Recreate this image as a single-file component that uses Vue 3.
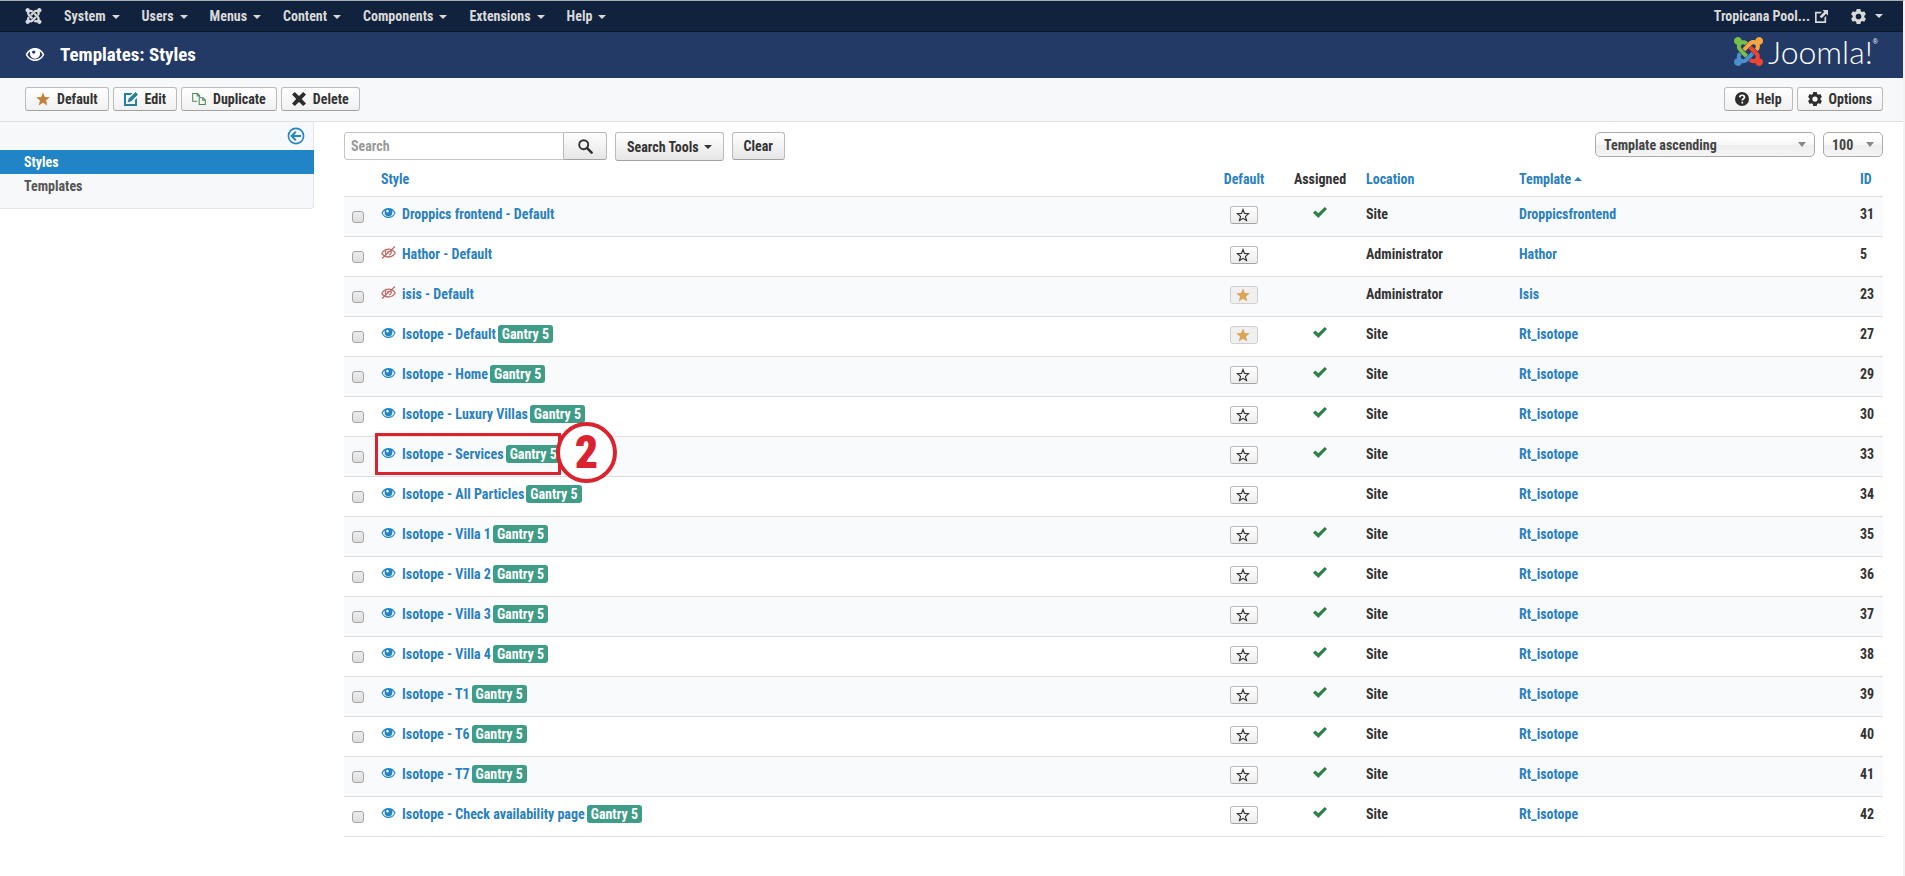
<script setup>
import { ref } from 'vue'

const menus = ['System', 'Users', 'Menus', 'Content', 'Components', 'Extensions', 'Help']

const tools = [
  { label: 'Default', icon: 'star', tone: 'orange' },
  { label: 'Edit', icon: 'edit', tone: 'teal' },
  { label: 'Duplicate', icon: 'copy', tone: 'green' },
  { label: 'Delete', icon: 'cross', tone: 'dark' },
]

const search = ref('')

const isotope = (id, name, extra = {}) => ({
  id, name: `Isotope - ${name}`, gantry: true, preview: true, assigned: true, location: 'Site', template: 'Rt_isotope', ...extra,
})

const rows = [
  { id: 31, name: 'Droppics frontend - Default', preview: true, assigned: true, location: 'Site', template: 'Droppicsfrontend' },
  { id: 5, name: 'Hathor - Default', location: 'Administrator', template: 'Hathor' },
  { id: 23, name: 'isis - Default', isDefault: true, location: 'Administrator', template: 'Isis' },
  isotope(27, 'Default', { isDefault: true }),
  isotope(29, 'Home'),
  isotope(30, 'Luxury Villas'),
  isotope(33, 'Services', { step: 2 }),
  isotope(34, 'All Particles', { assigned: false }),
  isotope(35, 'Villa 1'),
  isotope(36, 'Villa 2'),
  isotope(37, 'Villa 3'),
  isotope(38, 'Villa 4'),
  isotope(39, 'T1'),
  isotope(40, 'T6'),
  isotope(41, 'T7'),
  isotope(42, 'Check availability page'),
]
</script>

<template>
  <div class="page">
    <svg class="sprite" aria-hidden="true">
      <symbol id="joomla" viewBox="0 0 24 24">
        <path class="j-blue" d="M16.719 14.759L14.22 17.26l-2.37 2.37-.462.466c-1.368 1.365-3.297 1.83-5.047 1.397-.327 1.424-1.604 2.49-3.13 2.49C1.438 23.983 0 22.547 0 20.772c0-1.518 1.055-2.789 2.469-3.123-.446-1.76.016-3.705 1.396-5.08l.179-.18 2.37 2.37-.184.181c-.769.779-.769 2.024 0 2.789.771.78 2.022.78 2.787 0l.465-.465 2.367-2.371 2.502-2.506 2.368 2.372z" />
        <path class="j-red" d="M17.643 21.411c-1.822.563-3.885.12-5.328-1.318l-.18-.185 2.365-2.369.18.184c.771.768 2.018.768 2.787 0 .765-.765.769-2.01-.004-2.781l-.466-.465-2.365-2.37-2.502-2.503 2.37-2.369 2.499 2.505 2.367 2.37.464.464c1.365 1.36 1.846 3.278 1.411 5.021 1.56.224 2.759 1.56 2.759 3.18 0 1.784-1.439 3.21-3.209 3.21-1.545 0-2.851-1.096-3.135-2.565z" />
        <path class="j-orange" d="M6.975 9.461l2.508-2.505 2.37-2.37.462-.461c1.444-1.443 3.504-1.892 5.331-1.318C17.912 1.26 19.221.092 20.803.092c1.775 0 3.215 1.439 3.215 3.213 0 1.637-1.225 2.987-2.809 3.188.49 1.785.029 3.76-1.376 5.158l-.182.184-2.369-2.369.184-.184c.769-.77.769-2.016 0-2.783-.766-.766-2.011-.768-2.781.003l-.462.461-2.37 2.369-2.508 2.498z" />
        <path class="j-green" d="M3.938 11.51c-1.405-1.403-1.873-3.357-1.407-5.127C1.082 6.1 0 4.82 0 3.297 0 1.52 1.44.084 3.21.084c1.625 0 2.969 1.209 3.18 2.779 1.748-.416 3.668.05 5.028 1.407l.182.184-2.37 2.369-.184-.179c-.768-.765-2.011-.765-2.783 0-.764.78-.764 2.01.006 2.79l.461.45 2.37 2.37 2.505 2.505-2.37 2.355-2.49-2.505L4.4 12.015z" />
      </symbol>
      <symbol id="eye" viewBox="0 0 20 14">
        <path fill-rule="evenodd" d="M10 0C5.500 0 2 2.700 0 7c2 4.300 5.600 7 10 7s8-2.700 10-7C18 2.700 14.500 0 10 0zM10 12.400C6.600 12.400 3.500 10.600 1.800 7.400c.8-1.700 1.800-2.900 3-3.900A5.300 5.300 0 0 0 4.500 6a5.500 5.500 0 0 0 11 0c0-.9-.1-1.700-.4-2.500 1.300 1 2.300 2.200 3.100 3.900-1.700 3.200-4.800 5-8.200 5zM8.600 2.600a1.800 1.800 0 1 1 0 3.600 1.800 1.800 0 0 1 0-3.600z" />
      </symbol>
      <symbol id="eye-off" viewBox="0 0 15 13">
        <g fill="none" stroke="currentColor" stroke-width="1.300">
          <path d="M.8 7.500C2.500 4.500 4.800 3.200 7.500 3.200c2.700 0 5 1.300 6.700 3.800-1.700 2.800-4 4-6.700 4-2.800 0-5-1.100-6.700-3.500z" />
          <path d="M1 12.500 14 .5M5 4.200c-.9 1.800-.8 3.600.6 4.800M9.800 4c1 1.800.4 4.200-1.500 5.200M7.300 4.800l-.9 2.600" />
        </g>
      </symbol>
      <symbol id="star" viewBox="0 0 16 16"><path d="M8 0.500l2.100 5.200 5.700.4-4.400 3.600 1.500 5.800L8 12.300l-4.900 3.200 1.500-5.800L.2 6.100l5.700-.4z" /></symbol>
      <symbol id="star-open" viewBox="0 0 16 16"><path fill="none" stroke="currentColor" stroke-width="1.300" d="M8 1.700l1.700 4.500 4.800.3-3.700 3.100 1.200 4.800L8 11.800l-4 2.600 1.200-4.800-3.700-3.100 4.800-.3z" /></symbol>
      <symbol id="edit" viewBox="0 0 14 14">
        <path d="M0 1h8.500L6.700 3H2v9h9V8l2-2v8H0z" /><path d="M11.500 0 14 2.500 7.200 9.300 3.500 10.500l1.200-3.700z" />
      </symbol>
      <symbol id="copy" viewBox="0 0 16 14">
        <g fill="none" stroke="currentColor" stroke-width="1.200"><path d="M6 9.500H.8V.7h5.400l2.600 2.600V5M6 .7v2.800h2.800" /><path d="M8.200 13.300V5.500h4.400l2.600 2.600v5.200zM12.300 5.500v2.900h2.900" /></g>
      </symbol>
      <symbol id="cross" viewBox="0 0 14 14"><path d="M2.800 0 7 4 11.200 0 14 2.600 9.800 7l4.200 4.400L11.200 14 7 10l-4.200 4L0 11.400 4.200 7 0 2.600z" /></symbol>
      <symbol id="check" viewBox="0 0 14 11"><path d="M0 5.800 2.400 3.600 5.200 6.200 11.800 0 14 2 5.300 11z" /></symbol>
      <symbol id="gear" viewBox="0 0 16 16">
        <path fill-rule="evenodd" d="M6 0h4l.5 2.300 1.400.8 2.200-.7 1.800 3.200L14.200 7.200v1.600l1.700 1.600-1.800 3.200-2.200-.7-1.400.8L10 16H6l-.5-2.300-1.400-.8-2.200.7L.1 10.400 1.800 8.800V7.200L.1 5.600l1.800-3.200 2.200.7 1.400-.8zM8 5a3 3 0 1 0 0 6 3 3 0 0 0 0-6z" />
      </symbol>
      <symbol id="external" viewBox="0 0 14 14">
        <path d="M0 2h7.500L5.800 3.800H1.800v8.400h8.400V8.200L12 6.400V14H0z" /><path d="M8 0h6v6l-2-2-4.900 5L5 7l5-5z" />
      </symbol>
      <symbol id="help" viewBox="0 0 14 14">
        <circle cx="7" cy="7" r="7" /><path d="M4.700 5.400c.1-2.900 4.800-2.800 4.800-.2 0 1.600-2.200 1.600-2.200 3.200M7.300 9.700v1.700" fill="none" stroke="#fff" stroke-width="1.700" />
      </symbol>
      <symbol id="search" viewBox="0 0 15 15">
        <circle cx="5.700" cy="5.700" r="4.500" fill="none" stroke="currentColor" stroke-width="1.900" /><path d="M8.900 8.900l4.700 4.700" stroke="currentColor" stroke-width="2.600" stroke-linecap="round" />
      </symbol>
      <symbol id="back" viewBox="0 0 18 18">
        <g fill="none" stroke="currentColor"><circle cx="9" cy="9" r="7.600" stroke-width="1.600" /><path d="M4.500 9H14M8.800 4.800 4.600 9l4.200 4.200" stroke-width="2" /></g>
      </symbol>
    </svg>

    <nav class="navbar">
      <a href="#" class="brand" aria-label="Joomla"><svg><use href="#joomla" /></svg></a>
      <ul class="menu">
        <li v-for="m in menus" :key="m"><a href="#">{{ m }}<i class="caret"></i></a></li>
      </ul>
      <a href="#" class="site">Tropicana Pool...<svg class="ext"><use href="#external" /></svg></a>
      <a href="#" class="user" aria-label="User menu"><svg class="gear"><use href="#gear" /></svg><i class="caret"></i></a>
    </nav>

    <header class="header">
      <svg class="title-eye"><use href="#eye" /></svg>
      <h1>Templates: Styles</h1>
      <div class="logo"><svg><use href="#joomla" /></svg><span>Joomla!</span><sup>®</sup></div>
    </header>

    <div class="subhead">
      <button v-for="t in tools" :key="t.label" class="btn tool" type="button">
        <svg :class="t.tone"><use :href="'#' + t.icon" /></svg>{{ t.label }}
      </button>
      <span class="spacer"></span>
      <button class="btn tool" type="button"><svg class="dark"><use href="#help" /></svg>Help</button>
      <button class="btn tool" type="button"><svg class="dark"><use href="#gear" /></svg>Options</button>
    </div>

    <div class="body">
      <aside class="sidebar">
        <button class="collapse" type="button" aria-label="Toggle sidebar"><svg><use href="#back" /></svg></button>
        <a href="#" class="active">Styles</a>
        <a href="#">Templates</a>
      </aside>

      <main class="main">
        <div class="filters">
          <form class="search" @submit.prevent>
            <input v-model="search" type="text" placeholder="Search" aria-label="Search" />
            <button class="btn go" type="submit" aria-label="Submit search"><svg><use href="#search" /></svg></button>
          </form>
          <button class="btn tall" type="button">Search Tools<i class="caret"></i></button>
          <button class="btn" type="button">Clear</button>
          <span class="spacer"></span>
          <label class="select order"><select aria-label="Sort by"><option>Template ascending</option></select></label>
          <label class="select limit"><select aria-label="List limit"><option>100</option></select></label>
        </div>

        <table>
          <colgroup>
            <col class="c-check" /><col /><col class="c-flag" /><col class="c-flag" /><col class="c-loc" /><col class="c-tpl" /><col class="c-id" />
          </colgroup>
          <thead>
            <tr>
              <th></th>
              <th><a href="#">Style</a></th>
              <th class="center"><a href="#">Default</a></th>
              <th class="center">Assigned</th>
              <th><a href="#">Location</a></th>
              <th><a href="#">Template<i class="caret up"></i></a></th>
              <th><a href="#">ID</a></th>
            </tr>
          </thead>
          <tbody>
            <tr v-for="r in rows" :key="r.id">
              <td><input type="checkbox" :aria-label="'Select ' + r.name" /></td>
              <td>
                <div class="name">
                  <svg v-if="r.preview" class="eye"><use href="#eye" /></svg>
                  <svg v-else class="eye-off"><use href="#eye-off" /></svg>
                  <a href="#">{{ r.name }}</a>
                  <span v-if="r.gantry" class="label">Gantry 5</span>
                  <div v-if="r.step" class="callout"><b>{{ r.step }}</b></div>
                </div>
              </td>
              <td class="center">
                <button class="flag" type="button" :disabled="r.isDefault" :aria-label="r.isDefault ? 'Default style' : 'Set default'">
                  <svg><use :href="r.isDefault ? '#star' : '#star-open'" /></svg>
                </button>
              </td>
              <td class="center"><svg v-if="r.assigned" class="check"><use href="#check" /></svg></td>
              <td>{{ r.location }}</td>
              <td><a href="#">{{ r.template }}</a></td>
              <td>{{ r.id }}</td>
            </tr>
          </tbody>
        </table>
      </main>
    </div>
  </div>
</template>

<style>
body { margin: 0; background: #fff; }
</style>

<style scoped>
* { box-sizing: border-box; }
.page {
  min-height: 100vh;
  border-top: 1px solid #a9adb0;
  border-right: 2px solid #f3f3f3;
  font: bold 14px/18px "Liberation Sans Narrow", "Roboto Condensed", "Arial Narrow", "Liberation Sans", sans-serif;
  color: #333;
}
.sprite { position: absolute; width: 0; height: 0; }
svg { display: block; flex: none; fill: currentColor; }
a { color: #2a80c0; text-decoration: none; }
button, input, select { font: inherit; color: inherit; }
.spacer { flex: 1; }
.caret {
  display: inline-block;
  border: 4px solid transparent;
  border-top-color: currentColor;
  border-bottom: 0;
  margin-left: 5px;
  vertical-align: 2px;
}
.caret.up { border-top: 0; border-bottom: 4px solid currentColor; margin-left: 3px; vertical-align: 3px; }

.navbar {
  display: flex;
  align-items: center;
  height: 31px;
  padding: 0 20px 0 25px;
  background: #10223e;
  border-bottom: 1px solid #0b172b;
}
.navbar a { color: #d9d9d9; }
.brand svg { width: 17px; height: 16px; }
.menu { display: flex; flex: 1; gap: 22px; margin: 0; padding: 0 0 0 22px; list-style: none; }
.menu .caret { margin-left: 6px; }
.site { display: flex; align-items: center; gap: 5px; }
.ext { width: 13px; height: 13px; }
.user { display: flex; align-items: center; gap: 4px; margin-left: 23px; }
.gear { width: 15px; height: 15px; }

.header {
  display: flex;
  align-items: center;
  height: 46px;
  padding: 0 25px;
  background: #233a66;
  color: #fff;
}
.title-eye { width: 20px; height: 13px; margin-bottom: 2px; }
h1 { flex: 1; margin: 0 0 0 15px; font-size: 19px; line-height: 26px; }
.logo {
  --blue: #4c8fce;
  --red: #f0442f;
  --orange: #f9a541;
  --green: #78be4c;
  display: flex;
  align-items: center;
  padding-bottom: 7px;
}
.logo svg { width: 29px; height: 29px; margin-right: 5px; }
.logo span { font: 300 32px/36px Lato, sans-serif; }
.logo sup { align-self: flex-start; font: 7px/16px "Liberation Sans", sans-serif; }
.j-blue { fill: var(--blue, currentColor); }
.j-red { fill: var(--red, currentColor); }
.j-orange { fill: var(--orange, currentColor); }
.j-green { fill: var(--green, currentColor); }

.subhead {
  display: flex;
  gap: 4px;
  align-items: flex-start;
  height: 44px;
  padding: 9px 20px 0 25px;
  background: #f7f8fa;
  border-bottom: 1px solid #dfe2e5;
}
.btn {
  display: flex;
  align-items: center;
  justify-content: center;
  height: 28px;
  padding: 0 11px;
  border: 1px solid #bbb;
  border-bottom-color: #a2a2a2;
  border-radius: 3px;
  background: linear-gradient(#fff, #e6e6e6);
  white-space: nowrap;
}
.tall { height: 29px; }
.tool { height: 24px; padding: 0 10px; background: linear-gradient(#fff, #f0f0f0); }
.tool svg { width: 14px; height: 14px; margin-right: 7px; }
.orange { color: #c67f3c; }
.teal { color: #24809a; }
.green { color: #4d8a56; }
.dark { color: #2d2d2d; }

.body { display: flex; align-items: flex-start; gap: 30px; padding-right: 20px; }
.sidebar {
  display: flex;
  flex-direction: column;
  width: 314px;
  padding-bottom: 10px;
  background: #f7f8fa;
  border: 1px solid #e3e5e8;
  border-width: 0 1px 1px 0;
  border-radius: 0 0 4px 0;
}
.collapse { align-self: flex-end; height: 28px; padding: 0 8px; border: 0; background: none; color: #2384c6; }
.collapse svg { width: 18px; height: 18px; }
.sidebar a { padding: 3px 24px; color: #555; }
.sidebar a.active { background: #2184c6; color: #fff; margin-right: -1px; }

.main { flex: 1; min-width: 0; }
.filters { display: flex; align-items: flex-start; gap: 8px; padding-top: 10px; height: 39px; }
.search { display: flex; }
.search input {
  width: 220px;
  height: 28px;
  padding: 0 6px;
  border: 1px solid #c4c4c4;
  border-radius: 3px 0 0 3px;
  outline: 0;
  background: #fff;
}
.search input::placeholder { color: #9a9a9a; opacity: 1; }
.go { width: 44px; margin-left: -1px; border-radius: 0 3px 3px 0; }
.go svg { width: 15px; height: 15px; }
.select { position: relative; display: block; }
.select select {
  appearance: none;
  display: block;
  width: 100%;
  height: 25px;
  padding: 0 8px;
  border: 1px solid #aaa;
  border-radius: 5px;
  background: linear-gradient(#fff 20%, #f6f6f6 50%, #eee 52%, #f4f4f4);
  color: #444;
}
.select::after {
  content: "";
  position: absolute;
  top: 10px;
  right: 9px;
  border: 4px solid transparent;
  border-top: 5px solid #888;
  border-bottom: 0;
}
.order { width: 220px; }
.limit { width: 60px; }

table { width: 100%; table-layout: fixed; border-collapse: collapse; }
.c-check { width: 29px; }
.c-flag { width: 76px; }
.c-loc { width: 153px; }
.c-tpl { width: 341px; }
.c-id { width: 31px; }
th, td { padding: 8px; border-bottom: 1px solid #ddd; text-align: left; vertical-align: top; white-space: nowrap; }
th { height: 35px; padding-top: 9px; }
td { height: 40px; }
tbody tr:nth-child(odd) { background: #f9fafc; }
.center { text-align: center; }
.center svg { margin: 0 auto; }
td input {
  appearance: none;
  display: block;
  width: 12px;
  height: 12px;
  margin: 6px 0 0;
  border: 1px solid #a5a5a5;
  border-radius: 3px;
  background: linear-gradient(#eee, #ddd);
}
.name { position: relative; display: flex; width: max-content; }
.eye { width: 15px; height: 10px; margin: 3px 6px 0 0; color: #2384c6; }
.eye-off { width: 15px; height: 13px; margin: 1px 6px 0 0; color: #bd6f6a; }
.label { margin-left: 2px; padding: 0 4px; border-radius: 3px; background: #3f9c86; color: #fff; }
.flag {
  display: block;
  width: 28px;
  height: 18px;
  margin: 1px auto 0;
  padding: 0 7px 0 5px;
  border: 1px solid #bbb;
  border-bottom-color: #a2a2a2;
  border-radius: 3px;
  background: linear-gradient(#fff, #ebebeb);
}
.flag svg { width: 14px; height: 14px; }
.flag:disabled { background: #f0f0f0; border-color: #d0d0d0; color: #dca456; }
.center .check { width: 14px; height: 11px; margin-top: 2px; color: #2f8048; }

.callout {
  position: absolute;
  z-index: 1;
  top: -12px;
  left: -6px;
  width: 186px;
  height: 42px;
  border: 3px solid #da232e;
}
.callout b {
  position: absolute;
  top: -14px;
  right: -59px;
  width: 61px;
  height: 61px;
  border: 4px solid #da232e;
  border-radius: 50%;
  background: #fff;
  color: #da232e;
  font-size: 46px;
  line-height: 53px;
  text-align: center;
}
</style>
